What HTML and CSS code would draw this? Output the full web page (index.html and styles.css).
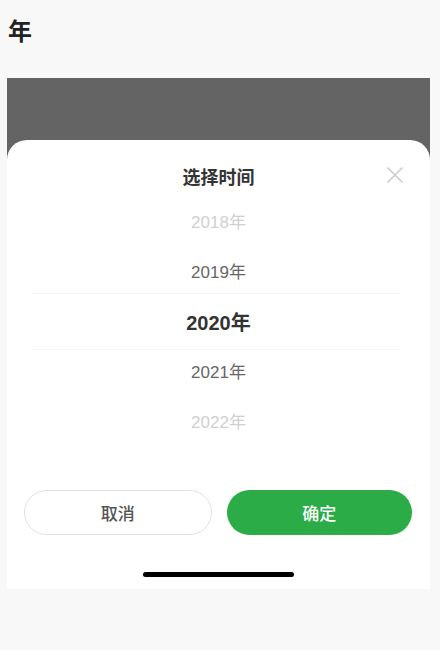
FILE: index.html
```html
<!DOCTYPE html>
<html lang="zh-CN">
<head>
<meta charset="utf-8">
<link rel="stylesheet" href="styles.css">
</head>
<body>
<div class="page-title">年</div>
<div class="stage">
  <div class="sheet">
    <div class="sheet-head">
      <div class="sheet-title">选择时间</div>
      <svg class="close" width="16" height="16" viewBox="0 0 16 16"><path d="M1 1L15 15M15 1L1 15" stroke="#cccccc" stroke-width="1.6" stroke-linecap="round"/></svg>
    </div>
    <div class="picker">
      <div class="band"></div>
      <div class="item far">2018年</div>
      <div class="item near">2019年</div>
      <div class="item sel">2020年</div>
      <div class="item near">2021年</div>
      <div class="item far">2022年</div>
    </div>
    <div class="actions">
      <div class="btn cancel">取消</div>
      <div class="btn ok">确定</div>
    </div>
    <div class="home"></div>
  </div>
</div>
</body>
</html>
```
FILE: styles.css
```css
* { box-sizing: border-box; }
html, body { margin: 0; padding: 0; }
body {
  background: #f8f8f8;
  font-family: "Liberation Sans", "Noto Sans CJK SC", sans-serif;
  width: 440px;
  height: 650px;
  overflow: hidden;
}
.page-title {
  padding: 18px 8px 0;
  line-height: 24px;
  font-size: 24px;
  font-weight: bold;
  color: #222;
  font-family: "Noto Sans CJK SC", sans-serif;
}
.stage {
  margin: 36px 10px 0 7px;
  background: #646464;
  padding-top: 62px;
}
.sheet {
  background: #fff;
  border-radius: 20px 20px 0 0;
  display: flex;
  flex-direction: column;
}
.sheet-head {
  position: relative;
  padding: 24px 0 10px;
  text-align: center;
}
.sheet-title {
  line-height: 24px;
  font-size: 18px;
  font-weight: bold;
  color: #333;
  font-family: "Noto Sans CJK SC", sans-serif;
}
.close {
  position: absolute;
  right: 27px;
  top: 27px;
}
.picker {
  position: relative;
  display: flex;
  flex-direction: column;
}
.band {
  position: absolute;
  left: 24px;
  right: 30px;
  top: 95px;
  height: 57px;
  border-top: 1px solid #f4f4f4;
  border-bottom: 1px solid #f6f6f6;
}
.item {
  height: 50px;
  line-height: 50px;
  text-align: center;
  font-size: 17px;
}
.item.far { color: #d0d0d0; }
.item.near { color: #666; }
.item.sel { color: #333; font-size: 20px; font-weight: bold; }
.actions {
  display: flex;
  gap: 15px;
  padding: 42px 18px 0 17px;
}
.btn {
  flex: 1;
  height: 45px;
  border-radius: 23px;
  display: flex;
  align-items: center;
  justify-content: center;
  font-size: 17px;
  font-family: "Noto Sans CJK SC", sans-serif;
  font-weight: 500;
}
.cancel {
  border: 1px solid #e2e2e2;
  color: #555;
  background: #fff;
}
.ok {
  background: #2bac47;
  color: #fff;
}
.home {
  align-self: center;
  width: 151px;
  height: 5px;
  border-radius: 3px;
  background: #000;
  margin: 37px 0 12px;
}
```
